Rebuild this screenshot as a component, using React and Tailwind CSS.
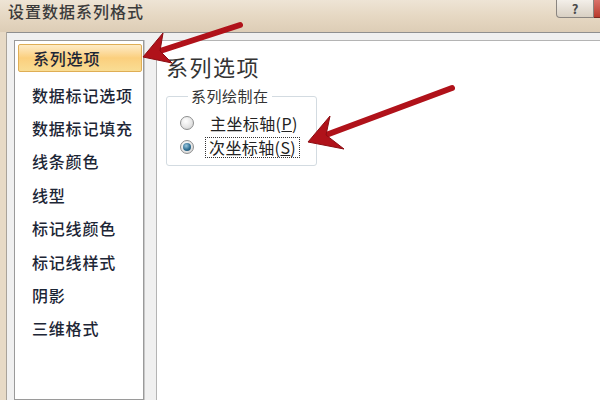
import React from "react";

const FONT = { fontFamily: '"Noto Sans CJK SC", "Noto Sans", sans-serif' };

const items = ["数据标记选项", "数据标记填充", "线条颜色", "线型", "标记线颜色", "标记线样式", "阴影", "三维格式"];

function Radio({ checked }) {
  return (
    <span className="relative flex items-center justify-center w-[14px] h-[14px] rounded-full border border-[#8e8f8f] bg-[radial-gradient(circle_at_40%_35%,#ffffff,#e6e6e6_55%,#c9c9c9)]">
      {checked && (
        <span className="w-[8px] h-[8px] rounded-full bg-[radial-gradient(circle_at_40%_35%,#9cc8de,#2f6f94_55%,#17455f)]" />
      )}
    </span>
  );
}

export default function App() {
  return (
    <div className="relative w-[600px] h-[400px] overflow-hidden bg-[#e7dac6]" style={FONT}>
      {/* title bar */}
      <div className="flex h-[32px] items-start bg-gradient-to-b from-[#eee4d5] via-[#e6d8c3] to-[#ddcdb6]">
        <div className="pl-[8px] pt-[1px] text-[16px] leading-[21px] tracking-[1px] font-medium text-[#3b3b3b]">设置数据系列格式</div>
        <div className="ml-auto flex">
          <div className="flex h-[18px] w-[38px] items-center justify-center rounded-bl-[4px] border border-t-0 border-[#8a8580] bg-gradient-to-b from-[#f3efe9] to-[#d9d0c3] text-[13px] leading-none font-bold text-[#4a4a4a]">?</div>
          <div className="h-[18px] w-[6px] border-b border-[#7a2a20] bg-gradient-to-b from-[#d9726a] to-[#b93a2c]" />
        </div>
      </div>

      {/* body */}
      <div className="flex h-[368px]">
        <div className="w-[7px] border-r border-[#a9a39a]" />
        <div className="flex flex-1 gap-[12px] border-t border-[#8f8f8f] bg-[#f0f0f0] pt-[7px] pl-[7px]">
          {/* list */}
          <div className="w-[130px] border border-[#9a9a9a] bg-white pt-[3px] pl-[3px] pr-[1px] shadow-[1px_0_0_#c8c8c8]">
            <div className="flex h-[28px] items-center rounded-[2px] border border-[#dfae55] bg-gradient-to-b from-[#fdebc6] via-[#fbcf7d] to-[#f9dd94] pl-[14px] text-[16px] font-medium tracking-[0.8px] text-[#1d2636]">
              系列选项
            </div>
            <div className="pt-[6px]">
              {items.map((t) => (
                <div key={t} className="flex h-[33.4px] items-center pl-[14px] text-[16px] font-medium tracking-[0.8px] text-[#1d2636]">
                  {t}
                </div>
              ))}
            </div>
          </div>

          {/* right panel */}
          <div className="flex-1 border-l border-t border-[#b4b4b4] bg-white pl-[9px] pt-[12px]">
            <div className="text-[22px] leading-[26px] tracking-[1.5px] text-[#333333]">系列选项</div>
            <fieldset className="mt-[8px] w-[151px] rounded-[3px] border border-[#d3dbe1] pl-[13px] pt-[7px] pb-[7px]">
              <legend className="ml-[8px] px-[3px] text-[15px] leading-[18px] tracking-[0.5px] text-[#333333]">系列绘制在</legend>
              <div className="flex h-[22px] items-center">
                <Radio />
                <span className="ml-[14px] px-[2px] text-[16px] leading-[20px] tracking-[0.4px] text-[#222222]">
                  主坐标轴(<span className="underline">P</span>)
                </span>
              </div>
              <div className="mt-[2px] flex h-[22px] items-center">
                <Radio checked />
                <span className="ml-[11px] border border-dotted border-[#333333] px-[3px] text-[16px] leading-[19px] tracking-[0.4px] text-[#222222]">
                  次坐标轴(<span className="underline">S</span>)
                </span>
              </div>
            </fieldset>
          </div>
        </div>
      </div>

      {/* arrows overlay */}
      <svg className="pointer-events-none absolute left-0 top-0" width="600" height="400" viewBox="0 0 600 400">
        <g fill="#b0121a" stroke="#8c0d12" strokeWidth="1" strokeLinejoin="round">
          <line x1="240" y1="25" x2="160" y2="51" stroke="#b0121a" strokeWidth="6" strokeLinecap="round" />
          <polygon points="143,57 163,33 160,51 172,63" />
          <line x1="452" y1="88" x2="326" y2="135" stroke="#b0121a" strokeWidth="6" strokeLinecap="round" />
          <polygon points="308,142 330,116 326,135 344,149" />
        </g>
      </svg>
    </div>
  );
}
